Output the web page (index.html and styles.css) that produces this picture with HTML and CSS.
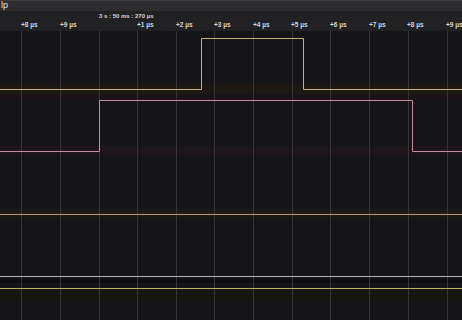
FILE: index.html
```html
<!DOCTYPE html>
<html>
<head>
<meta charset="utf-8">
<link rel="stylesheet" href="styles.css">
</head>
<body>
<div class="app">
  <div class="menubar"><span class="menu">lp</span></div>
  <div class="ruler">
    <span class="zero">3 s : 50 ms : 270 µs</span>
    <span class="lbl" style="left:21px">+8 µs</span>
    <span class="lbl" style="left:60px">+9 µs</span>
    <span class="lbl" style="left:137px">+1 µs</span>
    <span class="lbl" style="left:176px">+2 µs</span>
    <span class="lbl" style="left:214px">+3 µs</span>
    <span class="lbl" style="left:253px">+4 µs</span>
    <span class="lbl" style="left:291px">+5 µs</span>
    <span class="lbl" style="left:330px">+6 µs</span>
    <span class="lbl" style="left:369px">+7 µs</span>
    <span class="lbl" style="left:407px">+8 µs</span>
    <span class="lbl" style="left:446px">+9 µs</span>
  </div>
  <svg class="wave" width="462" height="289" viewBox="0 31 462 289">
    <g class="bands">
      <rect x="0" y="84" width="462" height="10" fill="#1c1914"/>
      <rect x="0" y="94" width="462" height="6" fill="#1a1418"/>
      <rect x="0" y="146" width="462" height="10" fill="#1c1519"/>
      <rect x="0" y="209" width="462" height="10" fill="#1b1915"/>
      <rect x="0" y="279" width="462" height="4" fill="#0c0c12"/>
      <rect x="0" y="289" width="462" height="12" fill="#15160f"/>
    </g>
    <g class="grid" stroke="#353538" stroke-width="1">
      <line x1="21.5" y1="28" x2="21.5" y2="320"/>
      <line x1="60.5" y1="28" x2="60.5" y2="320"/>
      <line x1="99.5" y1="22" x2="99.5" y2="320"/>
      <line x1="137.5" y1="28" x2="137.5" y2="320"/>
      <line x1="176.5" y1="28" x2="176.5" y2="320"/>
      <line x1="214.5" y1="28" x2="214.5" y2="320"/>
      <line x1="253.5" y1="28" x2="253.5" y2="320"/>
      <line x1="292.5" y1="28" x2="292.5" y2="320"/>
      <line x1="330.5" y1="28" x2="330.5" y2="320"/>
      <line x1="369.5" y1="28" x2="369.5" y2="320"/>
      <line x1="408.5" y1="28" x2="408.5" y2="320"/>
      <line x1="447.5" y1="28" x2="447.5" y2="320"/>
    </g>
    <g fill="none" stroke-width="1">
      <path d="M0 89.5 H201.5 V38.5 H303.5 V89.5 H462" stroke="#c9ae7e"/>
      <path d="M0 151.5 H99.5 V100.5 H412.5 V151.5 H462" stroke="#c28c9e"/>
      <path d="M0 214.5 H462" stroke="#b89a78"/>
      <path d="M0 276.5 H462" stroke="#b4b4b4"/>
      <path d="M0 288.5 H462" stroke="#b8b45e"/>
    </g>
  </svg>
</div>
</body>
</html>
```

FILE: styles.css
```css
* { box-sizing: border-box; }
html, body {
  margin: 0;
  padding: 0;
  background: #151517;
}
.app {
  width: 462px;
  height: 320px;
  overflow: hidden;
  display: flex;
  flex-direction: column;
  background: #151517;
  font-family: "Liberation Sans", Arial, sans-serif;
}
.menubar {
  height: 11px;
  flex: none;
  background: #2d2d30;
  border-top: 1px solid #3a3a3d;
  overflow: hidden;
  white-space: nowrap;
  padding-left: 1px;
}
.menu {
  display: block;
  color: #e6e6e6;
  font-size: 9px;
  line-height: 9px;
}
.ruler {
  position: relative;
  height: 20px;
  flex: none;
  background: #212124;
  color: #d6d6d6;
  font-size: 6.5px;
  font-weight: bold;
  white-space: nowrap;
}
.zero {
  position: absolute;
  left: 99px;
  top: 2px;
  font-size: 6px;
  line-height: 7px;
}
.lbl {
  position: absolute;
  top: 10px;
  line-height: 7px;
}
.wave {
  display: block;
  flex: none;
}
```
